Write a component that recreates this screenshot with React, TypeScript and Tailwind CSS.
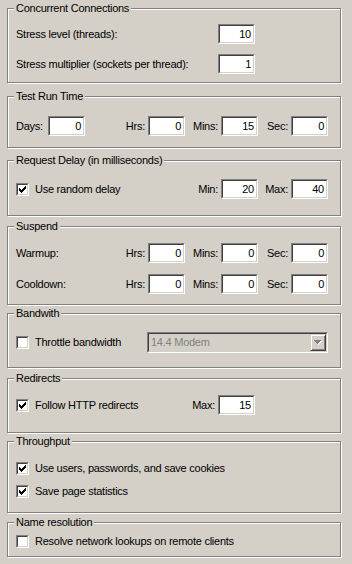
import type { ReactNode } from "react";
import clsx from "clsx";

function Group({
  title,
  className,
  children,
}: {
  title: string;
  className: string;
  children: ReactNode;
}) {
  return (
    <div
      className={clsx(
        "flex flex-col border border-[#808080] pl-[8px] shadow-[inset_1px_1px_0_#fff,1px_1px_0_#fff]",
        className
      )}
    >
      <div className="-mt-[7px] -ml-[2px] h-[13px] self-start bg-[#d4d0c8] px-[2px] leading-[13px]">
        {title}
      </div>
      {children}
    </div>
  );
}

function Edit({ value }: { value: string }) {
  return (
    <div className="h-[20px] w-[37px] shrink-0 border border-t-[#808080] border-l-[#808080] border-r-white border-b-white">
      <div className="flex h-full items-center justify-end border border-t-[#404040] border-l-[#404040] border-r-[#d4d0c8] border-b-[#d4d0c8] bg-white pr-[2px] leading-none">
        {value}
      </div>
    </div>
  );
}

function Field({
  label,
  value,
  className,
}: {
  label: string;
  value: string;
  className: string;
}) {
  return (
    <div className={clsx("flex items-center justify-end gap-[3px]", className)}>
      <span>{label}</span>
      <Edit value={value} />
    </div>
  );
}

function Check({ checked }: { checked: boolean }) {
  return (
    <div className="h-[13px] w-[13px] shrink-0 border border-t-[#808080] border-l-[#808080] border-r-white border-b-white">
      <div className="h-full w-full border border-t-[#404040] border-l-[#404040] border-r-[#d4d0c8] border-b-[#d4d0c8] bg-white p-px">
        {checked && (
          <svg width="7" height="7" viewBox="0 0 7 7" shapeRendering="crispEdges">
            <path
              d="M6 0h1v3h-1zM5 1h1v3h-1zM4 2h1v3h-1zM3 3h1v3h-1zM2 4h1v3h-1zM1 3h1v3h-1zM0 2h1v3h-1z"
              fill="#000"
            />
          </svg>
        )}
      </div>
    </div>
  );
}

function CheckRow({ checked, label, className }: { checked: boolean; label: string; className?: string }) {
  return (
    <div className={clsx("flex h-[17px] items-center gap-[6px]", className)}>
      <Check checked={checked} />
      <span>{label}</span>
    </div>
  );
}

function TimeFields({ h, m, s }: { h: string; m: string; s: string }) {
  return (
    <>
      <Field label="Hrs:" value={h} className="w-[100px]" />
      <Field label="Mins:" value={m} className="w-[73px]" />
      <Field label="Sec:" value={s} className="w-[70px]" />
    </>
  );
}

export default function App() {
  return (
    <div className="flex h-[564px] w-[352px] flex-col overflow-hidden bg-[#d4d0c8] pr-[11px] pl-[7px] font-['Liberation_Sans',Arial,sans-serif] text-[11px] tracking-[-0.25px] text-black">
      <Group title="Concurrent Connections" className="mt-[8px] h-[75px]">
        <div className="mt-[9px] flex w-[239px] items-center justify-between">
          <span>Stress level (threads):</span>
          <Edit value="10" />
        </div>
        <div className="mt-[10px] flex w-[239px] items-center justify-between">
          <span>Stress multiplier (sockets per thread):</span>
          <Edit value="1" />
        </div>
      </Group>

      <Group title="Test Run Time" className="mt-[13px] h-[52px]">
        <div className="mt-[13px] flex items-center">
          <div className="flex w-[69px] items-center justify-between">
            <span>Days:</span>
            <Edit value="0" />
          </div>
          <TimeFields h="0" m="15" s="0" />
        </div>
      </Group>

      <Group title="Request Delay (in milliseconds)" className="mt-[12px] h-[56px]">
        <div className="mt-[12px] flex items-center">
          <CheckRow checked label="Use random delay" className="w-[172px]" />
          <Field label="Min:" value="20" className="w-[70px]" />
          <Field label="Max:" value="40" className="w-[70px]" />
        </div>
      </Group>

      <Group title="Suspend" className="mt-[10px] h-[79px]">
        <div className="mt-[10px] flex items-center">
          <span className="w-[69px]">Warmup:</span>
          <TimeFields h="0" m="0" s="0" />
        </div>
        <div className="mt-[11px] flex items-center">
          <span className="w-[69px]">Cooldown:</span>
          <TimeFields h="0" m="0" s="0" />
        </div>
      </Group>

      <Group title="Bandwith" className="mt-[8px] h-[55px]">
        <div className="mt-[12px] flex items-center">
          <CheckRow checked={false} label="Throttle bandwidth" className="w-[131px]" />
          <div className="h-[21px] w-[181px] border border-t-[#808080] border-l-[#808080] border-r-white border-b-white">
            <div className="flex h-full items-center border border-t-[#404040] border-l-[#404040] border-r-[#d4d0c8] border-b-[#d4d0c8] bg-[#d4d0c8] pl-[2px]">
              <span className="flex-1 text-[#808080]">14.4 Modem</span>
              <div className="flex h-[17px] w-[16px] items-center justify-center border border-t-[#d4d0c8] border-l-[#d4d0c8] border-r-[#404040] border-b-[#404040] shadow-[inset_1px_1px_0_#fff,inset_-1px_-1px_0_#808080]">
                <svg width="8" height="5" viewBox="0 0 8 5" shapeRendering="crispEdges">
                  <path d="M1 1h7v1h-7zM2 2h5v1h-5zM3 3h3v1h-3zM4 4h1v1h-1z" fill="#fff" />
                  <path d="M0 0h7v1h-7zM1 1h5v1h-5zM2 2h3v1h-3zM3 3h1v1h-1z" fill="#808080" />
                </svg>
              </div>
            </div>
          </div>
        </div>
      </Group>

      <Group title="Redirects" className="mt-[10px] h-[55px]">
        <div className="mt-[10px] flex w-[239px] items-center">
          <CheckRow checked label="Follow HTTP redirects" className="flex-1" />
          <Field label="Max:" value="15" className="" />
        </div>
      </Group>

      <Group title="Throughput" className="mt-[8px] h-[72px]">
        <CheckRow checked label="Use users, passwords, and save cookies" className="mt-[12px]" />
        <CheckRow checked label="Save page statistics" className="mt-[6px]" />
      </Group>

      <Group title="Name resolution" className="mt-[9px] h-[35px]">
        <CheckRow checked={false} label="Resolve network lookups on remote clients" className="mt-[4px]" />
      </Group>
    </div>
  );
}
